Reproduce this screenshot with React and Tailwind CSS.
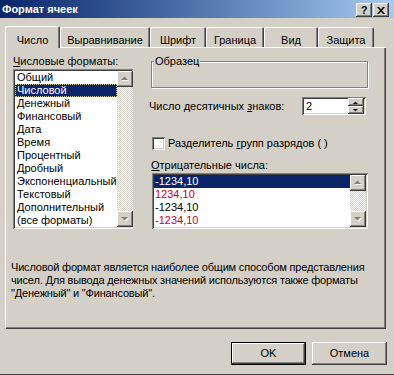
import React from 'react';

const raised = 'shadow-[inset_-1px_-1px_#404040,inset_1px_1px_#ffffff,inset_-2px_-2px_#808080,inset_2px_2px_#d4d0c8]';
const sunken = 'shadow-[inset_1px_1px_#808080,inset_-1px_-1px_#ffffff,inset_2px_2px_#404040,inset_-2px_-2px_#d4d0c8]';

const FORMATS = [
  'Общий', 'Числовой', 'Денежный', 'Финансовый', 'Дата', 'Время',
  'Процентный', 'Дробный', 'Экспоненциальный', 'Текстовый', 'Дополнительный', '(все форматы)',
];

const NEGATIVES = [
  { text: '-1234,10', red: false },
  { text: '1234,10', red: true },
  { text: '-1234,10', red: false },
  { text: '-1234,10', red: true },
];

const TABS = [
  { label: 'Выравнивание', w: 'w-[90px]' },
  { label: 'Шрифт', w: 'w-[56px]' },
  { label: 'Граница', w: 'w-[58px]' },
  { label: 'Вид', w: 'w-[54px]' },
  { label: 'Защита', w: 'w-[56px]' },
];

function ArrowBtn({ dir }) {
  const pts = dir === 'up' ? '4,9 11,9 7.5,5.5' : '4,6 11,6 7.5,9.5';
  const shadow = dir === 'up' ? '5,10 12,10 8.5,6.5' : '5,7 12,7 8.5,10.5';
  return (
    <div className={`h-[16px] w-[16px] bg-[#d4d0c8] ${raised}`}>
      <svg width="16" height="16" viewBox="0 0 16 16">
        <polygon points={shadow} fill="#ffffff" />
        <polygon points={pts} fill="#808080" />
      </svg>
    </div>
  );
}

function ScrollBar() {
  return (
    <div className="flex w-[16px] flex-col bg-[image:repeating-conic-gradient(#ffffff_0%_25%,#d4d0c8_0%_50%)] bg-[length:2px_2px]">
      <ArrowBtn dir="up" />
      <div className="flex-1" />
      <ArrowBtn dir="down" />
    </div>
  );
}

function SpinBtn({ dir }) {
  const pts = dir === 'up' ? '5,6 10,6 7.5,3.5' : '5,3 10,3 7.5,5.5';
  return (
    <div className={`h-[8px] w-[16px] bg-[#d4d0c8] ${raised}`}>
      <svg width="16" height="8" viewBox="0 0 16 8">
        <polygon points={pts} fill="#000000" />
      </svg>
    </div>
  );
}

export default function App() {
  return (
    <div className="flex h-[375px] w-[394px] flex-col overflow-hidden border-b border-[#404040] bg-[#d4d0c8] font-['Liberation_Sans',Arial,sans-serif] text-[11px] leading-[13px] text-black">
      {/* title bar */}
      <div className="flex h-[18px] items-center justify-between bg-gradient-to-r from-[#0a246a] to-[#a6caf0] pl-[2px] pr-[5px]">
        <span className="font-bold text-white">Формат ячеек</span>
        <div className="flex gap-[1px] pt-[2px]">
          <div className={`flex h-[14px] w-[16px] items-center justify-center bg-[#d4d0c8] font-bold ${raised}`}>?</div>
          <div className={`flex h-[14px] w-[16px] items-center justify-center bg-[#d4d0c8] ${raised}`}>
            <svg width="8" height="7" viewBox="0 0 8 7">
              <path d="M0 0h2l2 2.5L6 0h2L5 3.5 8 7H6L4 4.5 2 7H0l3-3.5z" fill="#000" />
            </svg>
          </div>
        </div>
      </div>

      {/* tabs */}
      <div className="mt-[8px] flex h-[21px] items-end pl-[5px]">
        <div className="relative z-10 -mb-[1px] flex h-[22px] w-[55px] items-end justify-center rounded-t-[2px] bg-[#d4d0c8] pb-[1px] shadow-[inset_1px_1px_#ffffff,inset_-1px_0_#404040,inset_-2px_0_#808080]">
          Число
        </div>
        {TABS.map(t => (
          <div key={t.label} className={`flex h-[20px] items-end justify-center rounded-t-[2px] shadow-[inset_1px_1px_#ffffff,inset_-1px_0_#404040,inset_-2px_0_#808080] ${t.w}`}>
            {t.label}
          </div>
        ))}
      </div>

      {/* panel */}
      <div className="ml-[5px] flex h-[282px] w-[381px] flex-col shadow-[inset_1px_1px_#ffffff,inset_-1px_-1px_#404040,inset_-2px_-2px_#808080]">
        <div className="flex pl-[8px] pt-[8px]">
          <div className="flex w-[120px] flex-col">
            <div className="h-[13px]"><u>Ч</u>исловые форматы:</div>
            <div className={`mt-[1px] flex h-[160px] bg-white p-[2px] ${sunken}`}>
              <div className="flex flex-1 flex-col">
                {FORMATS.map((f, i) => (
                  <div key={f} className={`h-[13px] whitespace-nowrap pl-[2px] ${i === 1 ? 'bg-[#0a246a] text-white outline-1 -outline-offset-1 outline-dotted outline-[#c8c8a0]' : ''}`}>
                    {f}
                  </div>
                ))}
              </div>
              <ScrollBar />
            </div>
          </div>

          <div className="ml-[16px] flex flex-col">
            <div className="relative ml-[2px] mt-[6px] h-[27px] w-[217px] border border-[#808080] shadow-[1px_1px_#ffffff,inset_1px_1px_#ffffff]">
              <span className="absolute -top-[7px] left-[2px] bg-[#d4d0c8] px-[1px]">Образец</span>
            </div>

            <div className="mt-[9px] flex h-[18px] items-center">
              <span className="w-[153px]">Число десятичных <u>з</u>наков:</span>
              <div className={`flex h-[18px] w-[64px] items-center justify-between bg-white py-[2px] pl-[4px] pr-[2px] ${sunken}`}>
                <span>2</span>
                <div className="flex flex-col">
                  <SpinBtn dir="up" />
                  <SpinBtn dir="down" />
                </div>
              </div>
            </div>

            <div className="ml-[3px] mt-[22px] flex h-[13px] items-center gap-[3px]">
              <div className={`h-[13px] w-[13px] bg-white ${sunken}`} />
              <span>Разделитель <u>г</u>рупп разрядов ( )</span>
            </div>

            <div className="ml-[2px] mt-[9px] h-[13px]"><u>О</u>трицательные числа:</div>
            <div className={`ml-[3px] mt-[1px] flex h-[56px] w-[216px] bg-white p-[2px] ${sunken}`}>
              <div className="flex flex-1 flex-col">
                {NEGATIVES.map((n, i) => (
                  <div key={i} className={`h-[13px] pl-[1px] ${i === 0 ? 'bg-[#0a246a] text-white' : n.red ? 'text-[#d0001c]' : ''}`}>
                    {n.text}
                  </div>
                ))}
              </div>
              <ScrollBar />
            </div>
          </div>
        </div>

        <p className="mt-[32px] whitespace-nowrap pl-[6px] tracking-[-0.18px]">
          Числовой формат является наиболее общим способом представления<br />
          чисел. Для вывода денежных значений используются также форматы<br />
          "Денежный" и "Финансовый".
        </p>
      </div>

      {/* buttons */}
      <div className="mt-[13px] flex justify-end gap-[6px] pr-[7px]">
        <div className="h-[23px] w-[75px] border border-black">
          <div className={`flex h-full w-full items-center justify-center ${raised}`}>OK</div>
        </div>
        <div className={`flex h-[23px] w-[75px] items-center justify-center ${raised}`}>Отмена</div>
      </div>
    </div>
  );
}
